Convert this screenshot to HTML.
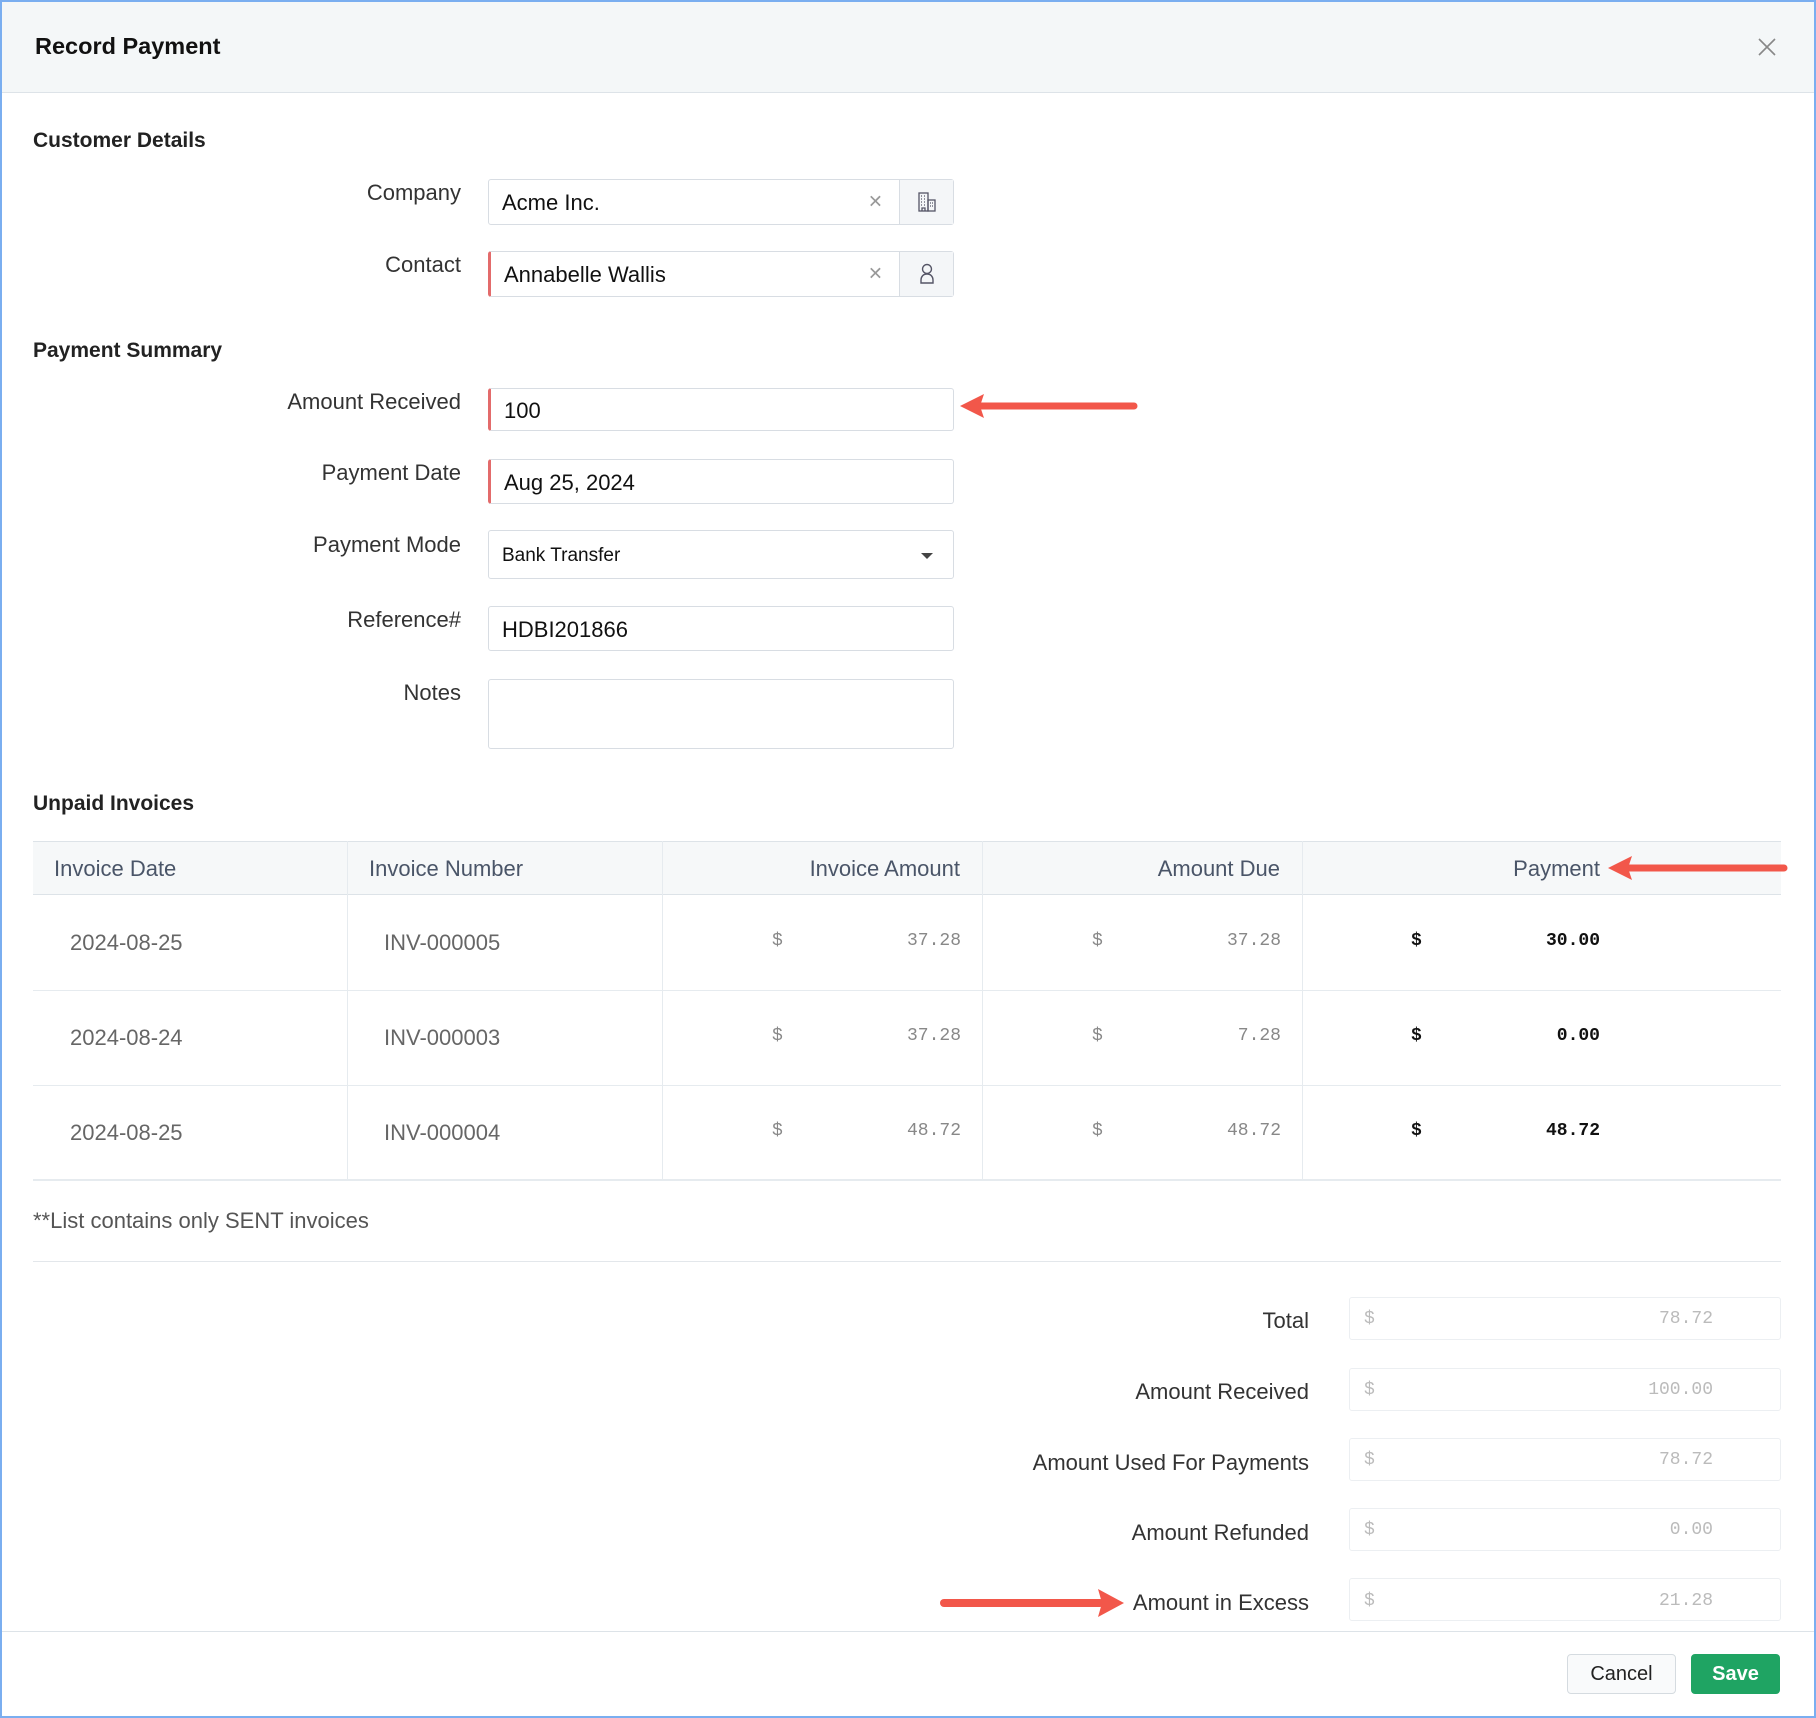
<!DOCTYPE html>
<html><head><meta charset="utf-8"><style>
*{box-sizing:border-box;margin:0;padding:0}
body{width:1816px;height:1718px;position:relative;background:#fff;font-family:"Liberation Sans",sans-serif;color:#222;overflow:hidden}
.frame{position:absolute;left:0;top:0;width:1816px;height:1718px;border:2px solid #7aaef0;}
.hdr{position:absolute;left:2px;top:2px;width:1812px;height:91px;background:#f4f7f8;border-bottom:1px solid #dde3e8}
.a{position:absolute;white-space:nowrap}
.sec{font-size:21px;font-weight:bold;color:#222}
.lbl{font-size:22px;color:#333;text-align:right;width:300px}
.inp{position:absolute;border:1px solid #d8dde3;border-radius:3px;background:#fff;font-size:22px;color:#111;padding-left:13px;display:flex;align-items:center;padding-top:2px}
.req{border-left:3px solid #e36b6b}
.btn{position:absolute;right:0;top:0;bottom:0;width:54px;border-left:1px solid #d8dde3;background:#f4f6f8;display:flex;align-items:center;justify-content:center}
.x{position:absolute;right:70px;top:50%;transform:translateY(-50%);color:#999;font-size:18px}
.th{font-size:22px;color:#4a5568}
.td{font-size:22px;color:#666}
.mono{font-family:"Liberation Mono",monospace;font-size:18px}
.sbox{position:absolute;left:1349px;width:432px;height:43px;border:1px solid #eceff2;border-radius:3px}
</style></head><body>
<div class="hdr"></div>
<div class="a" style="left:35px;top:33px;font-size:23.5px;font-weight:bold;color:#111">Record Payment</div>
<svg class="a" style="left:1758px;top:38px" width="18" height="18"><path d="M1 1L17 17M17 1L1 17" stroke="#888" stroke-width="1.6"/></svg>

<div class="a sec" style="left:33px;top:129px">Customer Details</div>
<div class="a lbl" style="left:161px;top:180px">Company</div>
<div class="inp" style="left:488px;top:179px;width:466px;height:46px">Acme Inc.<span class="x">✕</span><div class="btn"><svg width="22" height="22" viewBox="0 0 22 22" fill="none" stroke="#556" stroke-width="1.3"><rect x="3" y="2" width="9" height="18"/><rect x="12" y="9" width="7" height="11"/><path d="M5 5h1M8 5h1M5 8h1M8 8h1M5 11h1M8 11h1M5 14h1M8 14h1M14 12h1M16 12h1M14 15h1M16 15h1M6 20v-3h3v3"/></svg></div></div>
<div class="a lbl" style="left:161px;top:252px">Contact</div>
<div class="inp req" style="left:488px;top:251px;width:466px;height:46px">Annabelle Wallis<span class="x">✕</span><div class="btn"><svg width="22" height="24" viewBox="0 0 22 24" fill="none" stroke="#556" stroke-width="1.4"><circle cx="11" cy="7" r="4.5"/><path d="M11 12c-4 0-6 3-6 6v3h12v-3c0-3-2-6-6-6z"/></svg></div></div>

<div class="a sec" style="left:33px;top:339px">Payment Summary</div>
<div class="a lbl" style="left:161px;top:389px">Amount Received</div>
<div class="inp req" style="left:488px;top:388px;width:466px;height:43px">100</div>
<svg class="a" style="left:958px;top:391px" width="180" height="30"><path d="M22 15H176" stroke="#f2574a" stroke-width="7" stroke-linecap="round"/><path d="M2 15L26 3L22 15L26 27Z" fill="#f2574a"/></svg>
<div class="a lbl" style="left:161px;top:460px">Payment Date</div>
<div class="inp req" style="left:488px;top:459px;width:466px;height:45px">Aug 25, 2024</div>
<div class="a lbl" style="left:161px;top:532px">Payment Mode</div>
<div class="inp" style="left:488px;top:530px;width:466px;height:49px;font-size:19px">Bank Transfer<svg style="position:absolute;right:20px;top:22px" width="12" height="7"><path d="M0 0h12L6 6z" fill="#444"/></svg></div>
<div class="a lbl" style="left:161px;top:607px">Reference#</div>
<div class="inp" style="left:488px;top:606px;width:466px;height:45px">HDBI201866</div>
<div class="a lbl" style="left:161px;top:680px">Notes</div>
<div class="inp" style="left:488px;top:679px;width:466px;height:70px"></div>

<div class="a sec" style="left:33px;top:792px">Unpaid Invoices</div>
<div class="a" style="left:33px;top:841px;width:1748px;height:54px;background:#f6f8f9;border-top:1px solid #dde3e8;border-bottom:1px solid #dde3e8"></div>
<div class="a" style="left:347px;top:841px;width:1px;height:338px;background:#e6ebef"></div>
<div class="a" style="left:662px;top:841px;width:1px;height:338px;background:#e6ebef"></div>
<div class="a" style="left:982px;top:841px;width:1px;height:338px;background:#e6ebef"></div>
<div class="a" style="left:1302px;top:841px;width:1px;height:338px;background:#e6ebef"></div>
<div class="a" style="left:33px;top:990px;width:1748px;height:1px;background:#e6ebef"></div>
<div class="a" style="left:33px;top:1085px;width:1748px;height:1px;background:#e6ebef"></div>
<div class="a" style="left:33px;top:1179px;width:1748px;height:2px;background:#e6ebef"></div>
<div class="a th" style="left:54px;top:856px">Invoice Date</div>
<div class="a th" style="left:369px;top:856px">Invoice Number</div>
<div class="a th" style="right:856px;top:856px">Invoice Amount</div>
<div class="a th" style="right:536px;top:856px">Amount Due</div>
<div class="a th" style="right:216px;top:856px">Payment</div>
<svg class="a" style="left:1606px;top:853px" width="182" height="30"><path d="M22 15H178" stroke="#f2574a" stroke-width="7" stroke-linecap="round"/><path d="M2 15L26 3L22 15L26 27Z" fill="#f2574a"/></svg>

<div class="a td" style="left:70px;top:930px">2024-08-25</div>
<div class="a td" style="left:384px;top:930px">INV-000005</div>
<div class="a mono" style="left:772px;top:931px;color:#888">$</div><div class="a mono" style="right:855px;top:931px;color:#888">37.28</div>
<div class="a mono" style="left:1092px;top:931px;color:#888">$</div><div class="a mono" style="right:535px;top:931px;color:#888">37.28</div>
<div class="a mono" style="left:1411px;top:931px;color:#111;font-weight:bold">$</div><div class="a mono" style="right:216px;top:931px;color:#111;font-weight:bold">30.00</div>

<div class="a td" style="left:70px;top:1025px">2024-08-24</div>
<div class="a td" style="left:384px;top:1025px">INV-000003</div>
<div class="a mono" style="left:772px;top:1026px;color:#888">$</div><div class="a mono" style="right:855px;top:1026px;color:#888">37.28</div>
<div class="a mono" style="left:1092px;top:1026px;color:#888">$</div><div class="a mono" style="right:535px;top:1026px;color:#888">7.28</div>
<div class="a mono" style="left:1411px;top:1026px;color:#111;font-weight:bold">$</div><div class="a mono" style="right:216px;top:1026px;color:#111;font-weight:bold">0.00</div>

<div class="a td" style="left:70px;top:1120px">2024-08-25</div>
<div class="a td" style="left:384px;top:1120px">INV-000004</div>
<div class="a mono" style="left:772px;top:1121px;color:#888">$</div><div class="a mono" style="right:855px;top:1121px;color:#888">48.72</div>
<div class="a mono" style="left:1092px;top:1121px;color:#888">$</div><div class="a mono" style="right:535px;top:1121px;color:#888">48.72</div>
<div class="a mono" style="left:1411px;top:1121px;color:#111;font-weight:bold">$</div><div class="a mono" style="right:216px;top:1121px;color:#111;font-weight:bold">48.72</div>

<div class="a" style="left:33px;top:1208px;font-size:22px;color:#555">**List contains only SENT invoices</div>
<div class="a" style="left:33px;top:1261px;width:1748px;height:1px;background:#e3e7eb"></div>

<div class="a lbl" style="left:1009px;top:1308px">Total</div>
<div class="sbox" style="top:1297px"></div><div class="a mono" style="left:1364px;top:1309px;color:#bbb">$</div><div class="a mono" style="right:103px;top:1309px;color:#bbb">78.72</div>
<div class="a lbl" style="left:1009px;top:1379px">Amount Received</div>
<div class="sbox" style="top:1368px"></div><div class="a mono" style="left:1364px;top:1380px;color:#bbb">$</div><div class="a mono" style="right:103px;top:1380px;color:#bbb">100.00</div>
<div class="a lbl" style="left:1009px;top:1450px">Amount Used For Payments</div>
<div class="sbox" style="top:1438px"></div><div class="a mono" style="left:1364px;top:1450px;color:#bbb">$</div><div class="a mono" style="right:103px;top:1450px;color:#bbb">78.72</div>
<div class="a lbl" style="left:1009px;top:1520px">Amount Refunded</div>
<div class="sbox" style="top:1508px"></div><div class="a mono" style="left:1364px;top:1520px;color:#bbb">$</div><div class="a mono" style="right:103px;top:1520px;color:#bbb">0.00</div>
<div class="a lbl" style="left:1009px;top:1590px">Amount in Excess</div>
<div class="sbox" style="top:1578px"></div><div class="a mono" style="left:1364px;top:1591px;color:#bbb">$</div><div class="a mono" style="right:103px;top:1591px;color:#bbb">21.28</div>
<svg class="a" style="left:938px;top:1587px" width="188" height="32"><path d="M6 16H162" stroke="#f2574a" stroke-width="8" stroke-linecap="round"/><path d="M186 16L160 2L164 16L160 30Z" fill="#f2574a"/></svg>

<div class="a" style="left:2px;top:1631px;width:1812px;height:1px;background:#dde3e8"></div>
<div class="a" style="left:1567px;top:1654px;width:109px;height:40px;border:1px solid #d5dbe0;border-radius:4px;background:#f9fafb;font-size:20px;color:#222;display:flex;align-items:center;justify-content:center">Cancel</div>
<div class="a" style="left:1691px;top:1654px;width:89px;height:40px;border-radius:4px;background:#1fa463;font-size:20px;color:#fff;font-weight:bold;display:flex;align-items:center;justify-content:center">Save</div>
<div class="frame"></div>
</body></html>
